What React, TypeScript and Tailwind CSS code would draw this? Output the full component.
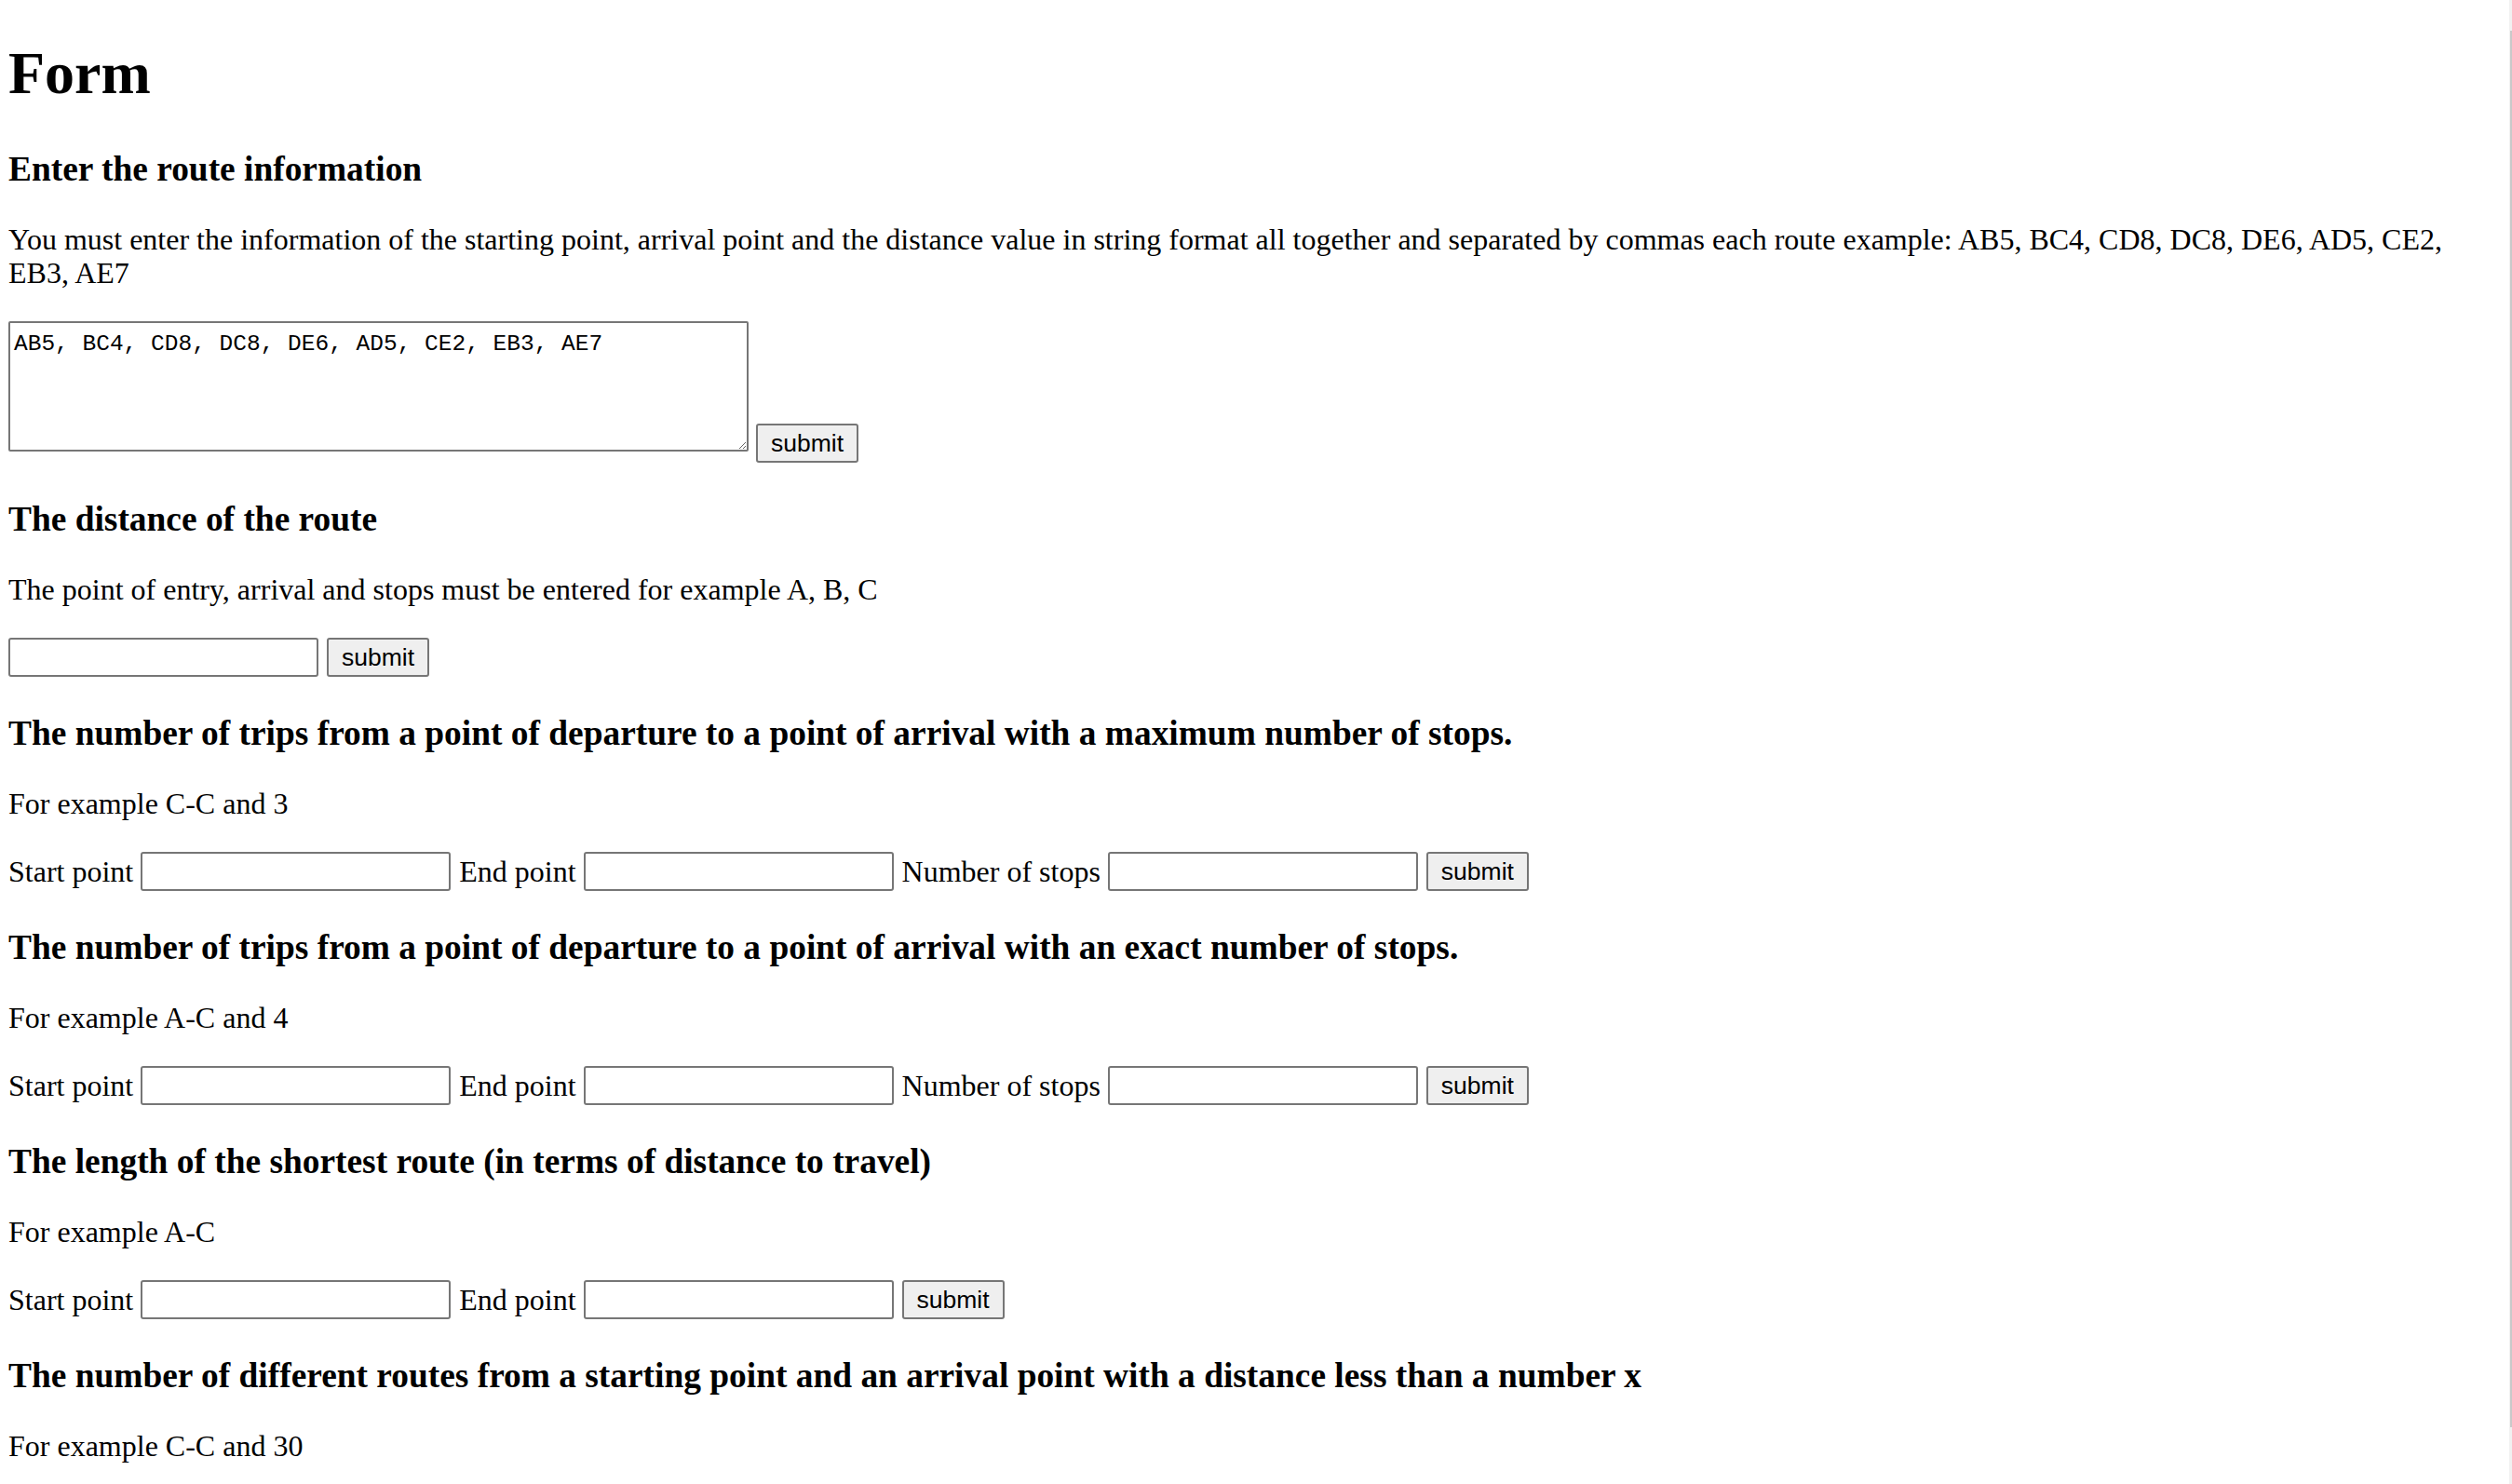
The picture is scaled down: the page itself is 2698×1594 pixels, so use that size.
import { useState } from 'react';

const inputClass =
  "h-[42px] w-[333px] rounded-[3px] border-2 border-[#767676] bg-white px-[4px] font-['Liberation_Sans',Arial,sans-serif] text-[25.6px] text-black outline-none";
const buttonClass =
  "h-[42px] w-[110px] rounded-[3px] border-2 border-[#767676] bg-[#efefef] font-['Liberation_Sans',Arial,sans-serif] text-[26.5px] leading-none text-black";

interface Query {
  title: string;
  example: string;
  fields: string[];
}

// the last query's inputs sit below the fold
const queries: Query[] = [
  {
    title: 'The number of trips from a point of departure to a point of arrival with a maximum number of stops.',
    example: 'For example C-C and 3',
    fields: ['Start point', 'End point', 'Number of stops'],
  },
  {
    title: 'The number of trips from a point of departure to a point of arrival with an exact number of stops.',
    example: 'For example A-C and 4',
    fields: ['Start point', 'End point', 'Number of stops'],
  },
  {
    title: 'The length of the shortest route (in terms of distance to travel)',
    example: 'For example A-C',
    fields: ['Start point', 'End point'],
  },
  {
    title: 'The number of different routes from a starting point and an arrival point with a distance less than a number x',
    example: 'For example C-C and 30',
    fields: [],
  },
];

function Heading({ children }: { children: React.ReactNode }) {
  return <h3 className="mt-[40px] text-[37.4px] font-bold leading-[42px]">{children}</h3>;
}

function Hint({ children }: { children: React.ReactNode }) {
  return <p className="mt-[36px] leading-[36px]">{children}</p>;
}

export default function App() {
  const [routes, setRoutes] = useState('AB5, BC4, CD8, DC8, DE6, AD5, CE2, EB3, AE7');

  return (
    <div className="flex h-[1594px] overflow-hidden bg-white text-black">
      <main className="flex-1 pl-[9px] pr-[4px] pt-[41px] font-['Liberation_Serif','Times_New_Roman',serif] text-[32px]">
        <h1 className="text-[64px] font-bold leading-[75px]">Form</h1>

        {/* Route input */}
        <h3 className="mt-[45px] text-[37.4px] font-bold leading-[42px]">Enter the route information</h3>
        <p className="mt-[36px] whitespace-nowrap leading-[36px]">
          You must enter the information of the starting point, arrival point and the distance value in string format
          all together and separated by commas each route example: AB5, BC4, CD8, DC8, DE6, AD5, CE2,
          <br />
          EB3, AE7
        </p>
        <form className="mt-[34px] flex items-start gap-[8px]" onSubmit={e => e.preventDefault()}>
          <textarea
            value={routes}
            onChange={e => setRoutes(e.target.value)}
            className="h-[140px] w-[795px] resize rounded-[2px] border-2 border-[#767676] px-[4px] pt-[9px] font-['Liberation_Mono','Courier_New',monospace] text-[24.5px] leading-[27px] outline-none"
          />
          <button type="submit" className={`mt-[110px] ${buttonClass}`}>
            submit
          </button>
        </form>

        {/* Distance of a route */}
        <Heading>The distance of the route</Heading>
        <Hint>The point of entry, arrival and stops must be entered for example A, B, C</Hint>
        <form className="mt-[34px] flex items-center gap-[9px]" onSubmit={e => e.preventDefault()}>
          <input type="text" className={inputClass} />
          <button type="submit" className={buttonClass}>
            submit
          </button>
        </form>

        {queries.map(q => (
          <section key={q.title}>
            <Heading>{q.title}</Heading>
            <Hint>{q.example}</Hint>
            {q.fields.length > 0 && (
              <form className="mt-[34px] flex items-center gap-[9px]" onSubmit={e => e.preventDefault()}>
                {q.fields.map(f => (
                  <label key={f} className="flex items-center gap-[8px] leading-[36px]">
                    <span>{f}</span>
                    <input type="text" className={inputClass} />
                  </label>
                ))}
                <button type="submit" className={buttonClass}>
                  submit
                </button>
              </form>
            )}
          </section>
        ))}
      </main>

      {/* scrollbar edge */}
      <div className="w-[3px] bg-[#f1f1f1]">
        <div className="ml-[1px] mt-[33px] h-[1500px] bg-[#c9c9c9]" />
      </div>
    </div>
  );
}
